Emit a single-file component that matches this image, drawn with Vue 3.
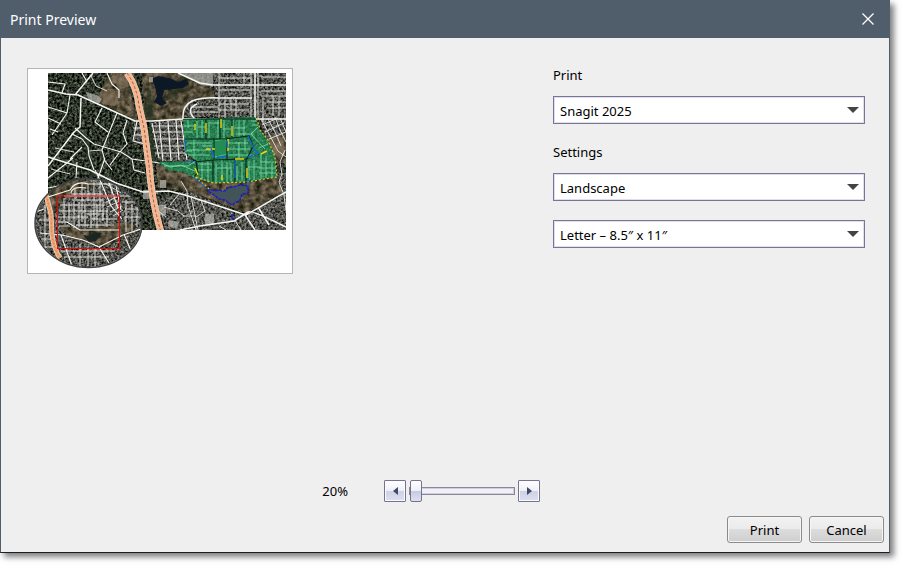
<script setup>
import { ref } from 'vue'

const printer = ref('Snagit 2025')
const orientation = ref('Landscape')
const paper = ref('Letter – 8.5″ x 11″')
const zoom = ref(20)

const step = (amount) => {
  zoom.value = Math.min(400, Math.max(20, Number(zoom.value) + amount))
}
</script>

<template>
  <section class="dialog" role="dialog" aria-labelledby="dialog-title">
    <header class="titlebar">
      <h1 id="dialog-title">Print Preview</h1>
      <button class="close" type="button" aria-label="Close">
        <svg viewBox="0 0 12 12" width="12" height="12"><path d="M0.5 0.5 11.5 11.5M11.5 0.5 0.5 11.5" /></svg>
      </button>
    </header>

    <div class="content">
      <div class="preview">
        <svg class="page" viewBox="28 69 264 204" role="img" aria-label="Page preview with neighborhood map">
          <defs>
            <filter id="trees" x="0" y="0" width="1" height="1" color-interpolation-filters="sRGB">
              <feTurbulence type="fractalNoise" baseFrequency="0.4" numOctaves="3" seed="4" />
              <feColorMatrix values="0.9 0 0 0 -0.28  0.9 0 0 0 -0.25  0.85 0 0 0 -0.27  0 0 0 0 1" />
            </filter>
            <filter id="houses" x="0" y="0" width="1" height="1" color-interpolation-filters="sRGB">
              <feTurbulence type="fractalNoise" baseFrequency="0.45" numOctaves="3" seed="9" />
              <feColorMatrix values="1 0 0 0 -0.18  0.96 0 0 0 -0.16  0.96 0 0 0 -0.18  0 0 0 0 1" />
            </filter>
            <filter id="marsh" x="0" y="0" width="1" height="1" color-interpolation-filters="sRGB">
              <feTurbulence type="fractalNoise" baseFrequency="0.18" numOctaves="3" seed="2" />
              <feColorMatrix values="0.7 0 0 0 -0.02  0.6 0 0 0 0  0.55 0 0 0 -0.05  0 0 0 0 1" />
            </filter>
            <clipPath id="map-clip"><rect x="48" y="73" width="238" height="157" /></clipPath>
            <clipPath id="east"><path d="M213 73H286V165L277 160 266 137 257 117H183Q181 102 194 97H215ZM152 120H183L190 161H158ZM134 120H142V145H134ZM158 199 190 192 245 215 286 192V230H165ZM274 173H286V195H279Z" /></clipPath>
            <clipPath id="marsh-clip"><path d="M142 73H178L213 90 215 98 190 99 182 120H145ZM108 75 126 76 138 121 96 101ZM156 164 195 176 247 183 277 177 283 192 246 213 192 192 158 187ZM267 137 286 132V163L276 163Z" /></clipPath>
            <clipPath id="district"><path d="M183 119 255 117 260 130 268 140 275 157 277 177 247 182 213 183 193 177 183 172 168 170 158 162 197 161 185 153Z" /></clipPath>
            <clipPath id="lens"><ellipse cx="88.5" cy="223" rx="53" ry="44" /></clipPath>
            <clipPath id="lens-marsh"><path d="M40 190Q70 174 100 184L66 196 52 214ZM56 222Q70 227 83 229L125 222 138 226 125 237 106 247 70 238Z" /></clipPath>
          </defs>

          <g clip-path="url(#map-clip)">
            <rect x="48" y="73" width="238" height="157" filter="url(#trees)" />
            <g clip-path="url(#east)"><rect x="48" y="73" width="238" height="157" filter="url(#houses)" /></g>
            <g clip-path="url(#marsh-clip)"><rect x="48" y="73" width="238" height="157" filter="url(#marsh)" /></g>
            <path class="green-belt" d="M77 130 86 138 88 155 93 168 90 184M149 90 153 160" />
            <path class="clearing" d="M104 89 114 89 118 99 115 106 102 104ZM111 73 125 73 130 86 121 89 113 82ZM267 139 283 137 285 154 279 160Z" />
            <path class="grove" d="M226 187 231 186 232 195 227 196ZM180 76 187 77 190 91 180 93 173 98 165 101 167 94ZM144 103 152 106 154 116 145 118Z" />
            <path class="water" d="M152 79 158 76 169 78 178 82 186 79 189 84 183 88 174 89 164 90 162 98 167 103 161 106 154 102 157 96 155 87Z" />
            <path class="roofs" d="m86 92 11 3 5 4-3 5-11-5ZM179 73h34v14l-12-2ZM149 77h4v5h-4ZM160 180h6v8h-6ZM154 205h12v10h-12ZM205 214h9v11h-9ZM169 220l10 2-2 7-9-3ZM143 190h9v9h-9Z" />

            <path class="road major" d="M48 90 66 94 78 95 135 121 152 121 183 119M93 73 75 95M81 98 80 127 74 132 48 166M48 157 90 170 116 183 143 192 169 191 185 195 246 215 286 192M286 227Q250 209 248 212L234 221 200 226 180 230M213 85H286M255 73 255 119M183 119H286M183 119Q182 106 192 101Q203 97 219 98H252M195 119Q185 109 197 104M178 73 200 83 213 85M245 215 255 230M258 207 269 225" />
            <path class="road" d="M48 82 65 84 62 93M82 73 87 82M107 73 112 84 119 90 119 98M70 95 67 113 52 135M48 107 67 113M48 118 61 124M50 129 58 132M75 128 86 138 94 144 121 152 132 159 160 163M72 134 82 139 88 147 89 156 94 170M70 159 82 147M102 108 95 122 108 132M117 113 102 150 105 161 112 170M127 120 123 133 127 144 119 153 110 165M132 159 134 170 145 173M95 170 105 190M48 178 73 158M77 162 76 178M48 188 69 184M96 184 105 158M137 121 133 141 145 144M133 128H141M134 135H143M152 123 159 158M159 121 163 161M168 121 171 161M176 120 179 160M181 121 187 160" />
            <path class="road thin" d="M151 126H183M152 132H184M153 139H185M154 146H186M155 153H186M192 107H218M190 112H218M219 73V118M225 97V118M236 97V117M244 73V84M251 73V118M258 73V119M263 98V122M219 78H251M219 90H250M219 104H249M219 110H249M231 98V110M261 77H286M261 91H286M261 96H286M273 96V116M279 96V116M267 102H286M267 108H286M261 119 268 132 278 151 286 157M268 119 275 132 281 146M275 117 280 130 286 142M280 118 286 132M285 150 280 162 282 174 279 182 284 195 286 210M262 125 278 118M265 132 284 123M269 139 286 132" />
            <path class="road thin" d="M181 181 187 191 188 206 196 230M191 196 198 230M164 207 178 211 184 216 196 216M180 193 170 205M201 200 205 211 196 217M158 193H150M157 210 166 217M234 219 241 230M219 226 226 230M51 169 70 174M55 148 74 152M89 151 102 150M91 76 96 86 107 91" />
            <path class="highway-edge" d="M127 73Q137 87 139 106L144 128 149 165Q152 203 161 232" />
            <path class="highway" d="M127 73Q137 87 139 106L144 128 149 165Q152 203 161 232" />
            <path class="highway-center" d="M127 73Q137 87 139 106L144 128 149 165Q152 203 161 232" />

            <path class="lake" d="M208 191Q208 188 215 191L220 190Q225 193 227 188L233 187 240 185 248 186 248 193 242 194 240 200 232 205 225 200 219 199 214 195ZM232 214 232 218 235 220" />

            <g clip-path="url(#district)">
              <rect x="155" y="115" width="125" height="70" filter="url(#houses)" />
              <rect class="tint" x="155" y="115" width="125" height="70" />
              <path class="streets" d="M184 126H194M184 132H193M188 120V128M197 121V138M202 120V138M209 122V138M218 120V138M224 120V138M233 118V137M239 119V138M244 120V137M187 143H212M187 150H211M194 139V160M202 146H212M228 143H248M227 149H250M228 155H254M239 142V159M245 138V151M258 127 251 134 265 149M251 121H259M252 125H261M210 123H220M198 127H206M223 129H231M234 128H245M236 134H254M162 163 170 167 181 165 195 171M164 166H188L196 161M198 164H212M198 170H212M202 162V182M208 162V182M216 162V182M222 160V181M227 162V182M231 163V181M237 166V181M242 162V181M249 161V180M254 160V180M261 153V179M266 156V178M272 163V178M216 168H231M248 167H260M260 162H274M259 168H276M259 173H276M184 151H192M188 155H210M259 148 268 144" />
              <path class="park" d="M213 141 226 139 228 154 215 157Z" />
              <path class="district-edge" d="M183 119H257M185 139H225L249 136 253 146 247 159 213 160 195 162M206 119V139M220 119V139M232 119V137M214 139V159M227 137V160M196 161 198 173 193 177M213 160V181M235 158V182M246 158V181" />
              <path class="yellow-line" d="M195 124V130M206 123V133M221 119V128M232 126V136M228 139V151M206 149H215M235 159H244M195 168 198 175M222 175V180M247 168V178M261 154 267 151" />
              <path class="blue-line" d="M185 139V151M211 148 214 158M185 161H196M217 157 226 157M235 160V178M248 136 254 149 258 153 248 157M227 141 228 148" />
            </g>
            <path class="outline-dashes" d="M257 118 260 130 268 140 275 157 277 177 247 182 213 183 193 176 205 185 210 190" />
            <path class="outline-blue" d="M193 177 206 187M248 186 248 178" />
          </g>

          <g clip-path="url(#lens)">
            <rect x="34" y="178" width="110" height="91" filter="url(#houses)" />
            <g clip-path="url(#lens-marsh)"><rect x="34" y="178" width="110" height="91" filter="url(#marsh)" /></g>
            <path class="lens-water" d="M83 235 89 236 94 232 102 233 96 241 89 242Z" />
            <path class="road" d="M48 197 70 190Q76 180 88 184H119M71 193Q72 186 86 188M100 180 111 206 122 219M108 180 118 208M115 181 121 210M36 212 44 209M40 233 62 235 83 240 99 247 123 235 141 229M64 196H116M57 222 67 222 80 230H119M99 247 109 263M124 234 131 251M61 235 72 266" />
            <path class="road thin" d="M71 194H103M72 200H103M60 205H105M59 211H108M58 217H88M75 188V199M82 183V222M88 184V201M94 180V221M100 182V212M64 198V221M69 203V222M74 202V228M79 202V227M85 205V227M91 211V228M97 205V228M103 198V221M107 208V227M92 219H117M76 225H114M87 214H104M106 202 117 197M107 207 120 201M110 212 122 206M113 216 123 210M106 184 121 193M119 196H138M122 202H139M125 209H141M124 217H141M126 200V232M132 204V231M137 207V227M45 205 45 250M39 220H51M41 239H53M45 247H56M59 226H70M61 251H115M64 257H109M80 244V267M88 246V266M95 249V267" />
            <path class="lens-highway-edge" d="M46 195 51 214 52 235Q54 249 60 258" />
            <path class="lens-highway" d="M46 195 51 214 52 235Q54 249 60 258" />
            <path class="lens-highway-center" d="M46 195 51 214 52 235Q54 249 60 258" />
            <rect class="extent" x="57.5" y="196" width="62" height="52.5" />
          </g>
          <ellipse class="lens-ring" cx="88.5" cy="223" rx="53.5" ry="44.5" />
        </svg>

        <div class="zoom-row">
          <label for="zoom">{{ zoom }}%</label>
          <div class="zoom-control">
            <button class="step" type="button" aria-label="Zoom out" @click="step(-10)">
              <svg viewBox="0 0 5 8" width="5" height="8"><path d="M5 0v8L0 4z" /></svg>
            </button>
            <input id="zoom" v-model="zoom" type="range" min="20" max="400" />
            <button class="step" type="button" aria-label="Zoom in" @click="step(10)">
              <svg viewBox="0 0 5 8" width="5" height="8"><path d="M0 0v8l5-4z" /></svg>
            </button>
          </div>
        </div>
      </div>

      <form class="settings" @submit.prevent>
        <div class="field">
          <label for="printer">Print</label>
          <div class="select-box">
            <select id="printer" v-model="printer"><option>Snagit 2025</option></select>
          </div>
        </div>
        <div class="field">
          <label for="orientation">Settings</label>
          <div class="select-box">
            <select id="orientation" v-model="orientation"><option>Landscape</option></select>
          </div>
        </div>
        <div class="select-box">
          <select v-model="paper" aria-label="Paper size"><option>Letter – 8.5″ x 11″</option></select>
        </div>
      </form>
    </div>

    <footer class="actions">
      <button type="button">Print</button>
      <button type="button">Cancel</button>
    </footer>
  </section>
</template>

<style>
body {
  background: #fff;
}
</style>

<style scoped>
* {
  box-sizing: border-box;
}

.dialog {
  display: flex;
  flex-direction: column;
  min-height: calc(100vh - 15px);
  margin: 0 15px 15px 0;
  border: 1px solid #505d6b;
  border-top: 0;
  border-bottom-color: #1c2024;
  background: #efefef;
  box-shadow: 4px 4px 6px rgba(0, 0, 0, 0.5);
  color: #000;
  font-family: "Noto Sans", "Open Sans", sans-serif;
  font-size: 13px;
}

button,
select {
  color: inherit;
  font: inherit;
}

.titlebar {
  display: flex;
  align-items: center;
  justify-content: space-between;
  height: 38px;
  margin: 0 -1px;
  padding: 0 16px 0 10px;
  background: #505d6b;
  color: #fff;
}

h1 {
  margin: 0;
  font-size: 14px;
  font-weight: 400;
}

.close {
  display: flex;
  padding: 0;
  border: 0;
  background: none;
}

.close path {
  fill: none;
  stroke: #fff;
  stroke-width: 1.3;
}

.content {
  display: flex;
  flex: 1;
  gap: 13px;
  padding: 30px 24px 14px 26px;
}

.preview {
  display: flex;
  flex: 1;
  flex-direction: column;
  justify-content: space-between;
}

.page {
  width: 266px;
  border: 1px solid #b2b6b4;
  background: #fff;
}

.green-belt { fill: none; stroke: #293b27; stroke-width: 4; opacity: 0.7; }
.clearing { fill: #8b7860; opacity: 0.6; }
.grove { fill: #232d1c; opacity: 0.6; }
.water { fill: #0d1826; }
.roofs { fill: #b8b7b1; opacity: 0.7; }
.road { fill: none; stroke: #f5f5f2; stroke-width: 1.1; stroke-linejoin: round; }
.road.major { stroke-width: 1.5; }
.road.thin { stroke-width: 0.9; stroke: #e6e6e3; }
.highway-edge { fill: none; stroke: #ddd9ce; stroke-width: 7; }
.highway { fill: none; stroke: #f9b58e; stroke-width: 6; }
.highway-center { fill: none; stroke: #876b58; stroke-width: 1; stroke-dasharray: 3 2; }
.lake { fill: #43535a; stroke: #1515d8; stroke-width: 1.3; stroke-dasharray: 3 1; }
.tint { fill: #129653; opacity: 0.65; }
.streets { fill: none; stroke: #7de2aa; stroke-width: 0.8; }
.park { fill: #238c55; stroke: #4cbc7e; stroke-width: 1; }
.district-edge { fill: none; stroke: #08291a; stroke-width: 1.2; }
.yellow-line { fill: none; stroke: #eed511; stroke-width: 1.4; }
.blue-line { fill: none; stroke: #1269d5; stroke-width: 1.3; }
.outline-dashes { fill: none; stroke: #d9c927; stroke-width: 1.2; stroke-dasharray: 2 2; }
.outline-blue { fill: none; stroke: #1269d5; stroke-width: 1.3; stroke-dasharray: 2 1; }
.lens-water { fill: #192622; }
.lens-highway-edge { fill: none; stroke: #ddd9ce; stroke-width: 5; }
.lens-highway { fill: none; stroke: #f7a36e; stroke-width: 3.5; }
.lens-highway-center { fill: none; stroke: #a77655; stroke-width: 0.6; stroke-dasharray: 2 2; }
.extent { fill: none; stroke: #e90808; stroke-width: 1; }
.lens-ring { fill: none; stroke: #3d4143; stroke-width: 1.5; }

.zoom-row {
  display: flex;
  align-items: center;
  justify-content: flex-end;
  gap: 36px;
}

.zoom-control {
  display: flex;
  align-items: center;
  gap: 3px;
}

.step {
  display: flex;
  align-items: center;
  justify-content: center;
  width: 22px;
  height: 22px;
  padding: 0;
  border: 1px solid #77738f;
  border-radius: 1px;
  background: linear-gradient(#fff, #eef0f7 48%, #ccd1e4 50%, #dde0ee);
  box-shadow: inset 0 0 0 1px #fafaff;
}

.step path {
  fill: #45466b;
}

input[type="range"] {
  width: 106px;
  height: 22px;
  margin: 0;
  appearance: none;
  background: none;
}

input[type="range"]::-webkit-slider-runnable-track {
  height: 8px;
  border: 1px solid #8987a0;
  background: #f0f0f5;
  box-shadow: inset 0 0 0 1px #d0d0dd;
}

input[type="range"]::-webkit-slider-thumb {
  width: 12px;
  height: 22px;
  margin-top: -8px;
  appearance: none;
  border: 1px solid #77738f;
  border-radius: 2px;
  background: linear-gradient(#fff, #eef0f7 48%, #c5cbe0 50%, #dde0ee);
}

.settings {
  display: flex;
  flex-direction: column;
  width: 312px;
}

.field {
  display: flex;
  flex-direction: column;
  gap: 14px;
  margin-bottom: 21px;
}

.field + .field {
  margin-bottom: 19px;
}

.field label {
  line-height: 14px;
}

.select-box {
  position: relative;
}

.select-box::after {
  position: absolute;
  top: 11px;
  right: 6px;
  border: 6px solid transparent;
  border-top-color: #444;
  border-bottom: 0;
  content: "";
  pointer-events: none;
}

select {
  display: block;
  width: 100%;
  height: 28px;
  padding: 1px 24px 0 6px;
  appearance: none;
  border: 1px solid #77769a;
  border-radius: 0;
  background: #fff;
  box-shadow: inset 0 0 0 1px #dfdfeb;
}

.actions {
  display: flex;
  justify-content: flex-end;
  gap: 7px;
  padding: 0 5px 9px;
}

.actions button {
  width: 75px;
  height: 27px;
  padding: 0;
  border: 1px solid #8b8b8b;
  border-radius: 3px;
  background: linear-gradient(#f2f2f2, #ebebeb 49%, #dcdcdc 50%, #cecece);
  box-shadow: inset 0 0 0 1px #f6f6f6;
}
</style>
